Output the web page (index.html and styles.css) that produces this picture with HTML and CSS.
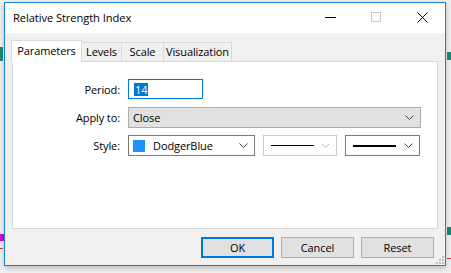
FILE: index.html
```html
<!DOCTYPE html>
<html lang="en">
<head>
  <meta charset="UTF-8">
  <title>Relative Strength Index</title>
  <link rel="stylesheet" href="styles.css">
</head>
<body>
  <div class="desktop">
    <!-- chart bits peeking out behind the dialog -->
    <div class="bit bit-teal-left"></div>
    <div class="bit bit-teal-right"></div>
    <div class="bit bit-teal-right2"></div>
    <div class="bit bit-magenta"></div>
    <div class="bit bit-red-left"></div>
    <div class="bit bit-red-right"></div>

    <div class="window">
      <div class="titlebar">
        <span class="title">Relative Strength Index</span>
        <div class="caption-buttons">
          <span class="cap-btn">
            <svg width="11" height="11" viewBox="0 0 11 11"><path d="M0 5.5h11" stroke="#000" stroke-width="1"/></svg>
          </span>
          <span class="cap-btn">
            <svg width="10" height="10" viewBox="0 0 10 10"><rect x="0.5" y="0.5" width="9" height="9" fill="none" stroke="#c8c8c8"/></svg>
          </span>
          <span class="cap-btn">
            <svg width="11" height="11" viewBox="0 0 11 11"><path d="M0.5 0.5l10 10M10.5 0.5l-10 10" stroke="#000" stroke-width="1"/></svg>
          </span>
        </div>
      </div>

      <div class="dialog-body">
        <ul class="tabs">
          <li class="tab active tab-params">Parameters</li>
          <li class="tab tab-levels">Levels</li>
          <li class="tab tab-scale">Scale</li>
          <li class="tab tab-visual">Visualization</li>
        </ul>

        <div class="panel">
          <div class="form-row">
            <label class="label">Period:</label>
            <div class="input focused"><span class="selected">14</span></div>
          </div>
          <div class="form-row">
            <label class="label">Apply to:</label>
            <div class="combo combo-wide">
              <span class="combo-text">Close</span>
              <svg class="chevron" width="9" height="5" viewBox="0 0 9 5"><path d="M0.5 0.5l4 4 4-4" fill="none" stroke="#444"/></svg>
            </div>
          </div>
          <div class="form-row">
            <label class="label">Style:</label>
            <div class="combo combo-color">
              <span class="swatch"></span>
              <span class="combo-text">DodgerBlue</span>
              <svg class="chevron" width="9" height="5" viewBox="0 0 9 5"><path d="M0.5 0.5l4 4 4-4" fill="none" stroke="#444"/></svg>
            </div>
            <div class="combo combo-line disabled">
              <span class="line thin"></span>
              <svg class="chevron" width="9" height="5" viewBox="0 0 9 5"><path d="M0.5 0.5l4 4 4-4" fill="none" stroke="#bcbcbc"/></svg>
            </div>
            <div class="combo combo-line wide">
              <span class="line thick"></span>
              <svg class="chevron" width="9" height="5" viewBox="0 0 9 5"><path d="M0.5 0.5l4 4 4-4" fill="none" stroke="#444"/></svg>
            </div>
          </div>
        </div>

        <div class="buttons">
          <button class="btn default">OK</button>
          <button class="btn">Cancel</button>
          <button class="btn">Reset</button>
        </div>
        <svg class="grip" width="9" height="9" viewBox="0 0 9 9">
          <rect x="7" y="1" width="2" height="2" fill="#bcbcbc"/>
          <rect x="4" y="4" width="2" height="2" fill="#bcbcbc"/>
          <rect x="7" y="4" width="2" height="2" fill="#bcbcbc"/>
          <rect x="1" y="7" width="2" height="2" fill="#bcbcbc"/>
          <rect x="4" y="7" width="2" height="2" fill="#bcbcbc"/>
          <rect x="7" y="7" width="2" height="2" fill="#bcbcbc"/>
        </svg>
      </div>
    </div>
  </div>
</body>
</html>
```

FILE: styles.css
```css
body {
  margin: 0;
  padding: 0;
  font-family: 'Open Sans', 'Noto Sans', 'Liberation Sans', sans-serif;
  font-size: 11px;
  letter-spacing: -0.1px;
  color: #000;
  background-color: #f4f4f4;
}
.desktop {
  position: relative;
  width: 451px;
  height: 273px;
  padding: 2px 0 0 4px;
  box-sizing: border-box;
  background-color: #f2f2f2;
  overflow: hidden;
}
.bit {
  position: absolute;
}
.bit-teal-left {
  left: 0;
  top: 47px;
  width: 3px;
  height: 14px;
  background-color: #1f8a7a;
}
.bit-teal-right {
  left: 447px;
  top: 52px;
  width: 4px;
  height: 8px;
  background-color: #1f8a7a;
}
.bit-teal-right2 {
  left: 447px;
  top: 227px;
  width: 4px;
  height: 8px;
  background-color: #1f8a7a;
}
.bit-magenta {
  left: 0;
  top: 234px;
  width: 4px;
  height: 7px;
  background-color: #e000e0;
}
.bit-red-left {
  left: 0;
  top: 248px;
  width: 3px;
  height: 1px;
  background-color: #d04040;
}
.bit-red-right {
  left: 447px;
  top: 258px;
  width: 4px;
  height: 1px;
  background-color: #d04040;
}
.window {
  position: relative;
  width: 442px;
  height: 264px;
  box-sizing: border-box;
  border: 1px solid #1883d7;
  background-color: #f0f0f0;
  display: flex;
  flex-direction: column;
  box-shadow: 0 2px 6px rgba(0, 0, 0, 0.25);
}
.titlebar {
  height: 30px;
  background-color: #fff;
  display: flex;
  align-items: center;
  justify-content: space-between;
  padding-left: 8px;
  flex-shrink: 0;
}
.title {
  font-size: 11.2px;
  margin-top: -1px;
}
.caption-buttons {
  display: flex;
  height: 100%;
}
.cap-btn {
  width: 46px;
  display: flex;
  align-items: center;
  justify-content: center;
  margin-top: -2px;
}
.dialog-body {
  position: relative;
  flex: 1;
  padding: 7px 7px 0 7px;
  display: flex;
  flex-direction: column;
}
.tabs {
  list-style: none;
  margin: 0;
  padding: 0;
  display: flex;
  align-items: flex-end;
  height: 21px;
  position: relative;
  z-index: 1;
}
.tab {
  box-sizing: border-box;
  height: 19px;
  line-height: 18px;
  padding: 0;
  text-align: center;
  border: 1px solid #d9d9d9;
  border-left: none;
  border-bottom: none;
  background-color: #f0f0f0;
  color: #000;
}
.tab.active {
  height: 22px;
  line-height: 20px;
  margin-left: -1px;
  margin-bottom: -1px;
  border-left: 1px solid #d9d9d9;
  border-right: 1px solid #d9d9d9;
  background-color: #fff;
}
.tab-params {
  width: 71px;
}
.tab-levels {
  width: 40px;
}
.tab-scale {
  width: 42px;
}
.tab-visual {
  width: 68px;
}
.panel {
  height: 168px;
  box-sizing: border-box;
  background-color: #fff;
  border: 1px solid #d9d9d9;
  padding-top: 17px;
  display: flex;
  flex-direction: column;
  gap: 8px;
}
.form-row {
  display: flex;
  align-items: center;
  gap: 8px;
}
.form-row:last-child {
  margin-top: -1px;
}
.label {
  width: 107px;
  text-align: right;
  color: #000;
}
.input {
  width: 75px;
  height: 20px;
  box-sizing: border-box;
  border: 1px solid #7a7a7a;
  padding: 0 0 0 5px;
  display: flex;
  align-items: center;
  background-color: #fff;
}
.input.focused {
  border-color: #0078d7;
}
.selected {
  background-color: #0078d7;
  color: #fff;
  line-height: 13px;
  padding: 0 1px;
}
.combo {
  height: 21px;
  box-sizing: border-box;
  border: 1px solid #7a7a7a;
  background-color: #fff;
  display: flex;
  align-items: center;
  padding: 0 6px 0 4px;
  position: relative;
}
.combo .chevron {
  margin-left: auto;
}
.combo-wide {
  width: 293px;
  background-color: #e1e1e1;
  border-color: #adadad;
}
.combo-color {
  width: 127px;
}
.swatch {
  width: 12px;
  height: 12px;
  background-color: #1e90ff;
  margin-right: 8px;
}
.combo-line {
  width: 74px;
  padding-left: 7px;
}
.combo-line.wide {
  width: 75px;
}
.combo-line.disabled {
  border-color: #cccccc;
}
.line {
  width: 43px;
  background-color: #000;
}
.line.thin {
  height: 1px;
}
.line.thick {
  height: 2px;
}
.buttons {
  display: flex;
  justify-content: flex-end;
  gap: 7px;
  margin-top: 8px;
  padding-right: 4px;
}
.btn {
  width: 73px;
  height: 21px;
  box-sizing: border-box;
  border: 1px solid #adadad;
  background-color: #e1e1e1;
  font-family: inherit;
  font-size: 11px;
  letter-spacing: -0.1px;
  color: #000;
  padding: 0;
}
.btn.default {
  border: 2px solid #0078d7;
}
.grip {
  position: absolute;
  right: 1px;
  bottom: 1px;
}
```
